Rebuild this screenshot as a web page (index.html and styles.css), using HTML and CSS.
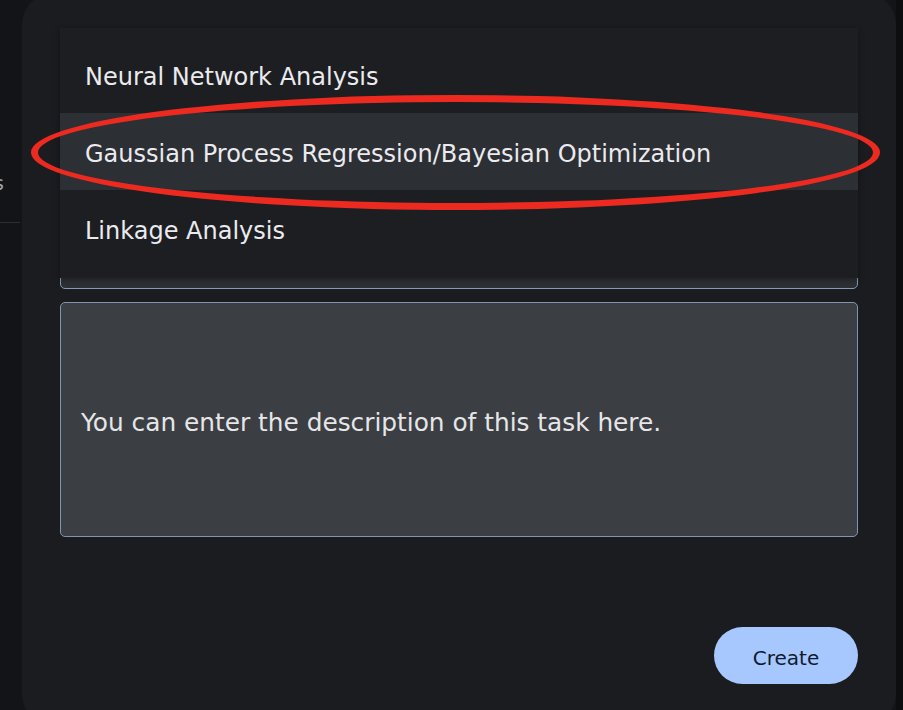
FILE: index.html
```html
<!DOCTYPE html>
<html>
<head>
<meta charset="utf-8">
<link rel="stylesheet" href="styles.css">
</head>
<body>
<div class="page">
  <aside class="side">
    <div class="side-label"><span>Tasks</span></div>
    <div class="side-rule"></div>
  </aside>
  <section class="dialog">
    <div class="select-wrap">
      <div class="select-field"></div>
      <ul class="menu">
        <li class="item">Neural Network Analysis</li>
        <li class="item active">Gaussian Process Regression/Bayesian Optimization</li>
        <li class="item">Linkage Analysis</li>
      </ul>
    </div>
    <div class="desc">You can enter the description of this task here.</div>
    <div class="actions">
      <button class="btn">Create</button>
    </div>
  </section>
  <div class="edge"></div>
</div>
<div class="mark"></div>
</body>
</html>
```
FILE: styles.css
```css
* { box-sizing: border-box; }
html, body {
  margin: 0;
  padding: 0;
  width: 903px;
  height: 710px;
  overflow: hidden;
  background: #121417;
  font-family: "DejaVu Sans", "Noto Sans", sans-serif;
}
.page {
  display: flex;
  width: 903px;
  height: 710px;
}
.side {
  width: 22px;
  flex: none;
  overflow: hidden;
  padding-top: 168px;
}
.side-label {
  display: flex;
  justify-content: flex-end;
  padding-right: 18px;
  height: 30px;
  color: #9fa2a6;
  font-size: 20px;
  line-height: 30px;
  white-space: nowrap;
}
.side-rule {
  margin-top: 24px;
  height: 1px;
  width: 20px;
  background: #2b2e32;
}
.dialog {
  flex: none;
  width: 874px;
  height: 730px;
  margin-top: -6px;
  background: #1a1c1f;
  border-radius: 30px;
  padding: 239px 38px 0 38px;
  display: flex;
  flex-direction: column;
}
.edge {
  flex: 1;
  background: #0c0e10;
}
.select-wrap {
  position: relative;
  height: 56px;
}
.select-field {
  height: 56px;
  border: 1px solid #8799b4;
  border-radius: 5px;
  background: #2d3034;
}
.menu {
  position: absolute;
  left: 0;
  right: 0;
  bottom: 11px;
  margin: 0;
  padding: 8px 0 11px 0;
  list-style: none;
  background: #1c1e22;
  box-shadow: 0 2px 6px rgba(0,0,0,0.35);
}
.item {
  height: 77px;
  display: flex;
  align-items: center;
  padding-left: 25px;
  padding-top: 5px;
  color: #ebeaee;
  font-size: 24px;
  white-space: nowrap;
}
.item.active {
  background: #2c2f34;
}
.desc {
  margin-top: 13px;
  height: 235px;
  border: 1px solid #8294b0;
  border-radius: 5px;
  background: #3b3e42;
  display: flex;
  align-items: center;
  padding: 6px 0 0 20px;
  color: #e6e6e8;
  font-size: 24.8px;
}
.actions {
  display: flex;
  justify-content: flex-end;
  margin-top: 90px;
}
.btn {
  width: 144px;
  height: 57px;
  border: none;
  border-radius: 29px;
  background: #a7c8fe;
  color: #0e1b2e;
  font-family: "DejaVu Sans", "Noto Sans", sans-serif;
  font-size: 20px;
  padding: 4px 0 0 0;
}
.mark {
  position: absolute;
  left: 31px;
  top: 95px;
  width: 849px;
  height: 115px;
  border: 7px solid #ec2a1f;
  border-radius: 50%;
}
```
